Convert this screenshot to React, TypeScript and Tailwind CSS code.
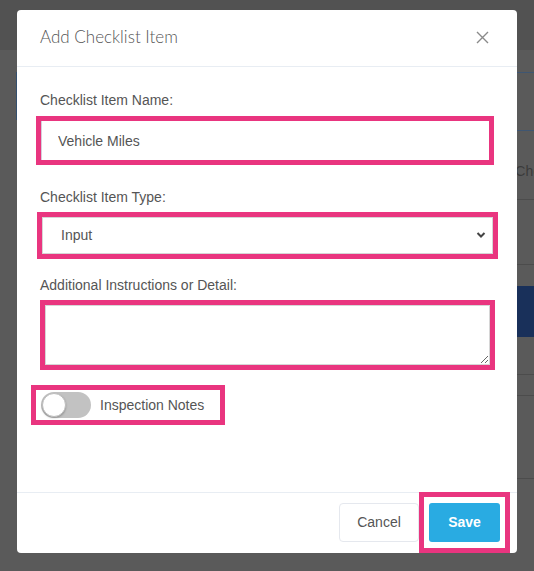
import React, { useState } from 'react'

const pink = 'border-[5px] border-[#e9357f]'

function Toggle({ on, onChange }: { on: boolean; onChange: (v: boolean) => void }) {
  return (
    <button
      type="button"
      onClick={() => onChange(!on)}
      className={`relative w-[50px] h-[26px] rounded-full shrink-0 ${on ? 'bg-[#29abe2]' : 'bg-[#c2c2c2]'}`}
    >
      <span
        className={`absolute top-[1px] w-[24px] h-[24px] rounded-full bg-white border border-[#bdbdbd] shadow-[0_1px_2px_rgba(0,0,0,0.25)] ${on ? 'left-[25px]' : 'left-[1px]'}`}
      />
    </button>
  )
}

export default function App() {
  const [name, setName] = useState('Vehicle Miles')
  const [type, setType] = useState('Input')
  const [detail, setDetail] = useState('')
  const [notes, setNotes] = useState(false)

  return (
    <div className="relative w-[534px] h-[571px] overflow-hidden bg-[#5a5a5a] font-['Liberation_Sans',Arial,sans-serif]">
      {/* page behind the overlay */}
      <div className="h-[50px] bg-[#525252]" />
      <div className="flex pt-[22px]">
        <div className="w-[16px] shrink-0" />
        <div className="w-[2px] h-[48px] bg-[#34506f] shrink-0" />
        <div className="flex-1 ml-[282px]">
          <div className="h-[59px] border-y border-[#3f5672]" />
          <div className="h-[69px] border-b border-[#4c4c4c] flex items-end justify-end pb-[17px]">
            <span className="text-[14px] text-[#3a3a3a] whitespace-nowrap -mr-[7px]">Che</span>
          </div>
          <div className="h-[65px] border-b border-[#4c4c4c]" />
          <div className="h-[21px]" />
          <div className="h-[51px] bg-[#19305a]" />
          <div className="h-[38px] border-b border-[#4c4c4c]" />
          <div className="h-[21px] border-b border-[#4c4c4c]" />
          <div className="h-[83px] border-b border-[#4c4c4c]" />
        </div>
      </div>

      {/* modal */}
      <div className="absolute left-[17px] top-[10px] w-[500px] h-[543px] bg-white rounded-[4px] flex flex-col">
        <div className="h-[57px] shrink-0 border-b border-[#e8edf3] flex items-center justify-between pl-[23px] pr-[28px]">
          <h2 className="text-[17px] font-light text-[#555] font-['Lato',sans-serif] -mt-[3px]">Add Checklist Item</h2>
          <button type="button" className="text-[#8a8a8a] -mt-[1px]">
            <svg width="13" height="13" viewBox="0 0 13 13" fill="none" stroke="currentColor" strokeWidth="1.4">
              <path d="M1 1l11 11M12 1L1 12" />
            </svg>
          </button>
        </div>

        <div className="flex-1 flex flex-col text-[14px] text-[#555]">
          <label className="mt-[23px] ml-[23px] leading-[20px]">Checklist Item Name:</label>
          <div className={`${pink} mt-[6px] ml-[19px] w-[458px] h-[49px]`}>
            <input
              value={name}
              onChange={(e) => setName(e.target.value)}
              className="w-full h-full border-l border-[#d4d0dc] pl-[16px] text-[14px] text-[#555] outline-none"
            />
          </div>

          <label className="mt-[22px] ml-[23px] leading-[20px]">Checklist Item Type:</label>
          <div className={`${pink} mt-[5px] ml-[20px] w-[461px] h-[47px]`}>
            <div className="relative w-full h-full">
              <select
                value={type}
                onChange={(e) => setType(e.target.value)}
                className="appearance-none w-full h-full border border-[#d6d6d6] pl-[18px] text-[14px] text-[#555] bg-white outline-none"
              >
                <option>Input</option>
                <option>Checkbox</option>
                <option>Pass / Fail</option>
              </select>
              <svg className="absolute right-[7px] top-[14px] pointer-events-none" width="10" height="8" viewBox="0 0 10 8" fill="none" stroke="#444" strokeWidth="2">
                <path d="M1.5 2l3.5 3.5L8.5 2" />
              </svg>
            </div>
          </div>

          <label className="mt-[16px] ml-[23px] leading-[20px]">Additional Instructions or Detail:</label>
          <div className={`${pink} mt-[5px] ml-[23px] w-[455px] h-[70px]`}>
            <textarea
              value={detail}
              onChange={(e) => setDetail(e.target.value)}
              className="block w-full h-full border border-[#d6d6d6] px-[12px] py-[6px] text-[14px] outline-none resize-y"
            />
          </div>

          <div className={`${pink} mt-[15px] ml-[14px] w-[194px] h-[40px] flex items-center pl-[5px] gap-[9px]`}>
            <Toggle on={notes} onChange={setNotes} />
            <span className="text-[14px] text-[#555]">Inspection Notes</span>
          </div>
        </div>

        <div className="h-[61px] shrink-0 border-t border-[#e8edf3] flex justify-end items-start pr-[7px]">
          <button
            type="button"
            className="mt-[10px] w-[80px] h-[39px] rounded-[4px] border border-[#e5e8ee] text-[14px] text-[#555] bg-white"
          >
            Cancel
          </button>
          <div className={`${pink} -mt-px h-[61px] w-[91px] p-[5px] pt-[6px]`}>
            <button
              type="button"
              className="w-full h-[39px] rounded-[3px] bg-[#29abe2] text-white text-[14px] font-bold"
            >
              Save
            </button>
          </div>
        </div>
      </div>
    </div>
  )
}
